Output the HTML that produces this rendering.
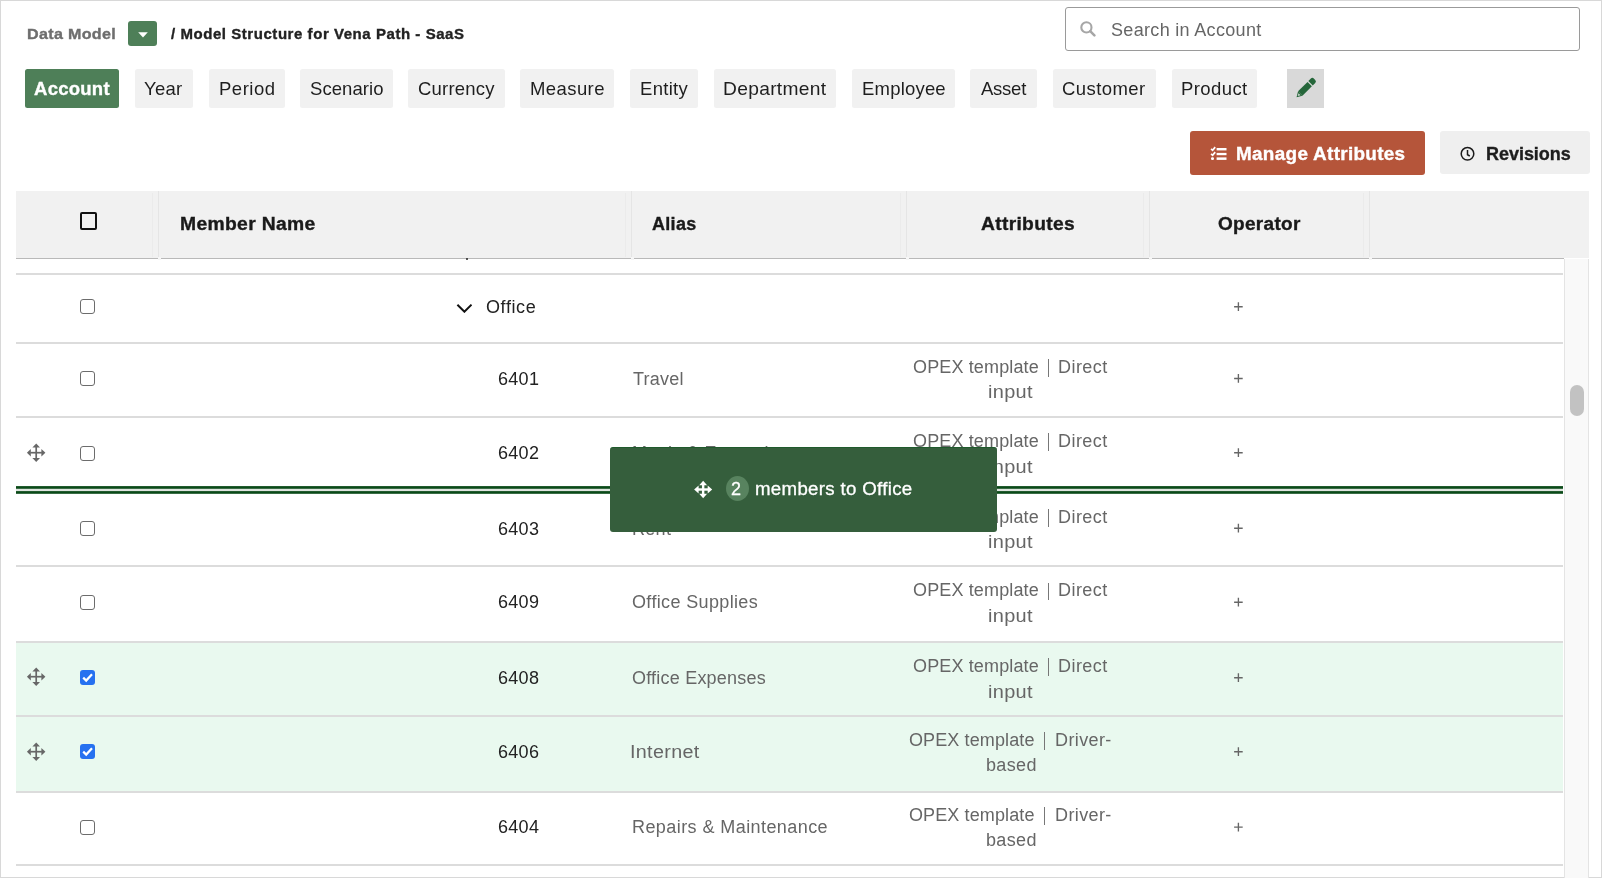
<!DOCTYPE html>
<html><head><meta charset="utf-8">
<style>
*{margin:0;padding:0;box-sizing:border-box}
html,body{width:1602px;height:878px;overflow:hidden;background:#fff}
body{position:relative;font-family:"Liberation Sans",sans-serif;color:#222}
.frame{position:absolute;left:0;top:0;width:1602px;height:878px;border:1px solid #d8d8d8}
.a{position:absolute}
.t{position:absolute;white-space:nowrap;line-height:1;will-change:transform}
.tab{position:absolute;top:69px;height:39px;background:#f1f1f1;border-radius:2.5px}
.hl{position:absolute;left:16px;width:1547px;height:2px;background:#dcdcdc}
.cb{position:absolute;left:80px;width:15px;height:15px;border:1.8px solid #6c6c6c;border-radius:3px;background:#fff}
.cbc{position:absolute;left:80px;width:15px;height:15px;border-radius:3px;background:#2671f0}
.plus{position:absolute;left:1233px;width:10px;height:10px}
.plus:before{content:"";position:absolute;left:0;top:4px;width:10px;height:1.3px;background:#666}
.plus:after{content:"";position:absolute;left:4.35px;top:0;width:1.3px;height:10px;background:#666}
.sep{position:absolute;top:191px;width:1px;height:67px;background:#e5e5e5}
.sepf{position:absolute;top:193px;width:1px;height:64px;background:#ebebeb}
.gap{position:absolute;top:257px;width:3px;height:3px;background:#f6f6f6}
</style></head><body>
<div class="frame"></div>

<!-- breadcrumb dropdown -->
<div class="a" style="left:128px;top:21px;width:29px;height:25px;background:#4e7f58;border-radius:3px">
  <svg class="a" style="left:10px;top:11px" width="10" height="6" viewBox="0 0 10 6"><path d="M0.2 0.2H9.8L5 5.4Z" fill="#fff"/></svg>
</div>

<!-- search -->
<div class="a" style="left:1065px;top:7px;width:515px;height:44px;border:1.7px solid #9a9a9a;border-radius:3px"></div>
<svg class="a" style="left:1080px;top:21px" width="16" height="16" viewBox="0 0 16 16"><circle cx="6.4" cy="6.4" r="5.1" fill="none" stroke="#a6a6a6" stroke-width="2.1"/><path d="M10.2 10.2L14.4 14.4" stroke="#a6a6a6" stroke-width="2.5" stroke-linecap="round"/></svg>

<!-- tabs -->
<div class="tab" style="left:25px;width:94px;background:#4e7f58"></div>
<div class="tab" style="left:135px;width:58px"></div>
<div class="tab" style="left:209px;width:76px"></div>
<div class="tab" style="left:300px;width:93px"></div>
<div class="tab" style="left:408px;width:97px"></div>
<div class="tab" style="left:520px;width:94px"></div>
<div class="tab" style="left:630px;width:68px"></div>
<div class="tab" style="left:714px;width:122px"></div>
<div class="tab" style="left:852px;width:103px"></div>
<div class="tab" style="left:970px;width:67px"></div>
<div class="tab" style="left:1053px;width:103px"></div>
<div class="tab" style="left:1172px;width:85px"></div>
<div class="a" style="left:1287px;top:69px;width:37px;height:39px;background:#d9d9d9"></div>
<svg class="a" style="left:1284px;top:66px" width="44" height="44" viewBox="0 0 44 44"><g transform="translate(21.4 22.4) rotate(-45) translate(-12.5 0)"><path d="M0 0L5.2 -3.1V3.1Z" fill="#25663a"/><path d="M1.6 0L4.2 -1.5V1.5Z" fill="#cfd8d0"/><rect x="5.2" y="-3.1" width="13.4" height="6.2" fill="#25663a"/><path d="M19.8 -3.1H23.3Q25.4 -3.1 25.4 -1V1Q25.4 3.1 23.3 3.1H19.8Z" fill="#25663a"/></g></svg>

<!-- action buttons -->
<div class="a" style="left:1190px;top:131px;width:235px;height:44px;background:#b5553a;border-radius:3px"></div>
<svg class="a" style="left:1210px;top:146px" width="18" height="16" viewBox="0 0 18 16"><path d="M1.1 2.9L2.6 4.3L5.2 1.1M1.1 7.9L2.6 9.3L5.2 6.1" stroke="#fff" stroke-width="1.7" fill="none"/><rect x="1" y="11.2" width="3" height="2.8" rx="1.2" fill="#fff"/><rect x="6.6" y="2" width="9.9" height="2.4" fill="#fff"/><rect x="6.6" y="6.9" width="9.9" height="2.3" fill="#fff"/><rect x="6.6" y="11.4" width="9.9" height="2.5" fill="#fff"/></svg>
<div class="a" style="left:1440px;top:131px;width:150px;height:43px;background:#efefef;border-radius:3px"></div>
<svg class="a" style="left:1459px;top:146px" width="17" height="17" viewBox="0 0 17 17"><circle cx="8.5" cy="7.8" r="6.3" fill="none" stroke="#1a1a1a" stroke-width="1.5"/><path d="M8.5 3.9V8.7L10.8 10" stroke="#1a1a1a" stroke-width="1.5" fill="none"/></svg>

<!-- table header -->
<div class="a" style="left:16px;top:191px;width:1573px;height:67px;background:#f1f1f1"></div>
<div class="a" style="left:16px;top:258px;width:1548px;height:1px;background:#b9b9b9"></div>
<div class="sep" style="left:158px"></div><div class="sepf" style="left:152px"></div><div class="gap" style="left:158px"></div>
<div class="sep" style="left:631px"></div><div class="sepf" style="left:625px"></div><div class="gap" style="left:631px"></div>
<div class="sep" style="left:906px"></div><div class="sepf" style="left:900px"></div><div class="gap" style="left:906px"></div>
<div class="sep" style="left:1149px"></div><div class="sepf" style="left:1143px"></div><div class="gap" style="left:1149px"></div>
<div class="sep" style="left:1369px"></div><div class="sepf" style="left:1363px"></div><div class="gap" style="left:1369px"></div>
<div class="a" style="left:80px;top:212px;width:17px;height:18px;border:2px solid #111;border-radius:2px"></div>

<!-- scrollbar -->
<div class="a" style="left:1564px;top:259px;width:25px;height:619px;background:#f9f9f9;border-left:1px solid #e4e4e4;border-right:1px solid #e4e4e4"></div>
<div class="a" style="left:1570px;top:385px;width:14px;height:31px;background:#c2c2c2;border-radius:7px"></div>

<!-- body rows -->
<div class="a" style="left:16px;top:642px;width:1547px;height:150px;background:#e9f9ef"></div>
<div class="hl" style="top:273px"></div>
<div class="hl" style="top:342px"></div>
<div class="hl" style="top:416px"></div>
<div class="hl" style="top:565px"></div>
<div class="hl" style="top:641px"></div>
<div class="hl" style="top:715px"></div>
<div class="hl" style="top:791px"></div>
<div class="hl" style="top:864px"></div>

<div class="cb" style="top:299px"></div>
<svg class="a" style="left:456px;top:303px" width="16" height="10" viewBox="0 0 16 10"><path d="M1.4 1.7L8.4 8.7L15.5 1.6" stroke="#111" stroke-width="2" fill="none"/></svg>
<svg class="a" style="left:1233px;top:301px" width="11" height="11" viewBox="0 -0.19999999999998863 11 11"><path d="M1.1 5.5H9.7M5.4 1.1V9.8" stroke="#666" stroke-width="1.35"/></svg>

<div class="cb" style="top:371px"></div>
<svg class="a" style="left:1233px;top:373px" width="11" height="11" viewBox="0 0.0 11 11"><path d="M1.1 5.5H9.7M5.4 1.1V9.8" stroke="#666" stroke-width="1.35"/></svg>

<svg class="a" style="left:26px;top:443px" width="20" height="20" viewBox="0 0 20 20"><use href="#mvg"/></svg>
<div class="cb" style="top:446px"></div>
<svg class="a" style="left:1233px;top:447px" width="11" height="11" viewBox="0 -0.19999999999998863 11 11"><path d="M1.1 5.5H9.7M5.4 1.1V9.8" stroke="#666" stroke-width="1.35"/></svg>

<div class="cb" style="top:521px"></div>
<svg class="a" style="left:1233px;top:523px" width="11" height="11" viewBox="0 0.2999999999999545 11 11"><path d="M1.1 5.5H9.7M5.4 1.1V9.8" stroke="#666" stroke-width="1.35"/></svg>

<div class="cb" style="top:595px"></div>
<svg class="a" style="left:1233px;top:597px" width="11" height="11" viewBox="0 0.2999999999999545 11 11"><path d="M1.1 5.5H9.7M5.4 1.1V9.8" stroke="#666" stroke-width="1.35"/></svg>

<svg class="a" style="left:26px;top:667px" width="20" height="20" viewBox="0 0 20 20"><use href="#mvg"/></svg>
<div class="cbc" style="top:670px"><svg width="15" height="15" viewBox="0 0 15 15"><path d="M3.2 7.6L6.2 10.6L12 4.2" stroke="#fff" stroke-width="2.2" fill="none"/></svg></div>
<svg class="a" style="left:1233px;top:672px" width="11" height="11" viewBox="0 -0.20000000000004547 11 11"><path d="M1.1 5.5H9.7M5.4 1.1V9.8" stroke="#666" stroke-width="1.35"/></svg>

<svg class="a" style="left:26px;top:742px" width="20" height="20" viewBox="0 0 20 20"><use href="#mvg"/></svg>
<div class="cbc" style="top:744px"><svg width="15" height="15" viewBox="0 0 15 15"><path d="M3.2 7.6L6.2 10.6L12 4.2" stroke="#fff" stroke-width="2.2" fill="none"/></svg></div>
<svg class="a" style="left:1233px;top:746px" width="11" height="11" viewBox="0 -0.20000000000004547 11 11"><path d="M1.1 5.5H9.7M5.4 1.1V9.8" stroke="#666" stroke-width="1.35"/></svg>

<div class="cb" style="top:820px"></div>
<svg class="a" style="left:1233px;top:822px" width="11" height="11" viewBox="0 0.39999999999997726 11 11"><path d="M1.1 5.5H9.7M5.4 1.1V9.8" stroke="#666" stroke-width="1.35"/></svg>

<div class="a" style="left:466px;top:258px;width:2px;height:2px;background:#222;border-radius:1px"></div>
<div class="t" style="left:27.33px;top:26.3px;font-size:15px;font-weight:bold;color:#6e6e6e;letter-spacing:0.3px;-webkit-text-stroke:0.35px #6e6e6e;transform:scaleX(1.0728);transform-origin:0 0">Data Model</div>
<div class="t" style="left:170.6px;top:26.3px;font-size:15px;font-weight:bold;color:#222;letter-spacing:0.552px;-webkit-text-stroke:0.35px #222">/ Model Structure for Vena Path - SaaS</div>
<div class="t" style="left:1110.9px;top:20.8px;font-size:18px;font-weight:normal;color:#666;letter-spacing:0.324px">Search in Account</div>
<div class="t" style="left:33.7px;top:79.8px;font-size:18.5px;font-weight:bold;color:#fff;letter-spacing:0.266px;-webkit-text-stroke:0.35px #fff">Account</div>
<div class="t" style="left:143.7px;top:79.6px;font-size:18.5px;font-weight:normal;color:#1e1e1e;letter-spacing:0.3px">Year</div>
<div class="t" style="left:218.5px;top:79.6px;font-size:18.5px;font-weight:normal;color:#1e1e1e;letter-spacing:0.5px">Period</div>
<div class="t" style="left:309.5px;top:79.6px;font-size:18.5px;font-weight:normal;color:#1e1e1e;letter-spacing:0.071px">Scenario</div>
<div class="t" style="left:418.0px;top:79.6px;font-size:18.5px;font-weight:normal;color:#1e1e1e;letter-spacing:0.214px">Currency</div>
<div class="t" style="left:530.0px;top:79.6px;font-size:18.5px;font-weight:normal;color:#1e1e1e;letter-spacing:0.417px">Measure</div>
<div class="t" style="left:640.0px;top:79.6px;font-size:18.5px;font-weight:normal;color:#1e1e1e;letter-spacing:0.3px">Entity</div>
<div class="t" style="left:723.26px;top:79.6px;font-size:18.5px;font-weight:normal;color:#1e1e1e;letter-spacing:0.3px;transform:scaleX(1.0378);transform-origin:0 0">Department</div>
<div class="t" style="left:861.8px;top:79.6px;font-size:18.5px;font-weight:normal;color:#1e1e1e;letter-spacing:0.199px">Employee</div>
<div class="t" style="left:981.0px;top:79.6px;font-size:18.5px;font-weight:normal;color:#1e1e1e;letter-spacing:-0.25px">Asset</div>
<div class="t" style="left:1062.0px;top:79.6px;font-size:18.5px;font-weight:normal;color:#1e1e1e;letter-spacing:0.429px">Customer</div>
<div class="t" style="left:1181.0px;top:79.6px;font-size:18.5px;font-weight:normal;color:#1e1e1e;letter-spacing:0.417px">Product</div>
<div class="t" style="left:1236.05px;top:144.8px;font-size:18px;font-weight:bold;color:#fff;letter-spacing:0.3px;-webkit-text-stroke:0.35px #fff;transform:scaleX(1.0494);transform-origin:0 0">Manage Attributes</div>
<div class="t" style="left:1485.5px;top:144.8px;font-size:18px;font-weight:bold;color:#1e1e1e;letter-spacing:-0.036px;-webkit-text-stroke:0.35px #1e1e1e">Revisions</div>
<div class="t" style="left:180.43px;top:215.0px;font-size:18px;font-weight:bold;color:#1a1a1a;letter-spacing:0.3px;-webkit-text-stroke:0.35px #1a1a1a;transform:scaleX(1.0726);transform-origin:0 0">Member Name</div>
<div class="t" style="left:652.0px;top:215.0px;font-size:18px;font-weight:bold;color:#1a1a1a;letter-spacing:0.3px;-webkit-text-stroke:0.35px #1a1a1a">Alias</div>
<div class="t" style="left:981.43px;top:215.0px;font-size:18px;font-weight:bold;color:#1a1a1a;letter-spacing:0.3px;-webkit-text-stroke:0.35px #1a1a1a;transform:scaleX(1.0674);transform-origin:0 0">Attributes</div>
<div class="t" style="left:1217.75px;top:215.0px;font-size:18px;font-weight:bold;color:#1a1a1a;letter-spacing:0.3px;-webkit-text-stroke:0.35px #1a1a1a;transform:scaleX(1.0545);transform-origin:0 0">Operator</div>
<div class="t" style="left:486.0px;top:298.0px;font-size:18px;font-weight:normal;color:#222;letter-spacing:0.6px">Office</div>
<div class="t" style="left:497.8px;top:369.8px;font-size:18px;font-weight:normal;color:#222;letter-spacing:0.3px">6401</div>
<div class="t" style="left:632.5px;top:369.8px;font-size:18px;font-weight:normal;color:#666;letter-spacing:0.22px">Travel</div>
<div class="t" style="left:912.9px;top:357.8px;font-size:18px;font-weight:normal;color:#666;letter-spacing:0.142px">OPEX template</div>
<div class="t" style="left:1058.4px;top:357.8px;font-size:18px;font-weight:normal;color:#666;letter-spacing:0.44px">Direct</div>
<div class="t" style="left:988.29px;top:383.3px;font-size:18px;font-weight:normal;color:#666;letter-spacing:0.3px;transform:scaleX(1.1077);transform-origin:0 0">input</div>
<div class="t" style="left:497.8px;top:444.0px;font-size:18px;font-weight:normal;color:#222;letter-spacing:0.3px">6402</div>
<div class="t" style="left:631.5px;top:444.0px;font-size:18px;font-weight:normal;color:#666;letter-spacing:0.3px">Meals &amp; Entertainment</div>
<div class="t" style="left:912.9px;top:432.0px;font-size:18px;font-weight:normal;color:#666;letter-spacing:0.142px">OPEX template</div>
<div class="t" style="left:1058.4px;top:432.0px;font-size:18px;font-weight:normal;color:#666;letter-spacing:0.44px">Direct</div>
<div class="t" style="left:988.29px;top:457.5px;font-size:18px;font-weight:normal;color:#666;letter-spacing:0.3px;transform:scaleX(1.1077);transform-origin:0 0">input</div>
<div class="t" style="left:497.8px;top:519.5px;font-size:18px;font-weight:normal;color:#222;letter-spacing:0.3px">6403</div>
<div class="t" style="left:631.5px;top:519.5px;font-size:18px;font-weight:normal;color:#666;letter-spacing:0.3px">Rent</div>
<div class="t" style="left:912.9px;top:507.5px;font-size:18px;font-weight:normal;color:#666;letter-spacing:0.142px">OPEX template</div>
<div class="t" style="left:1058.4px;top:507.5px;font-size:18px;font-weight:normal;color:#666;letter-spacing:0.44px">Direct</div>
<div class="t" style="left:988.29px;top:533.0px;font-size:18px;font-weight:normal;color:#666;letter-spacing:0.3px;transform:scaleX(1.1077);transform-origin:0 0">input</div>
<div class="t" style="left:497.8px;top:593.3px;font-size:18px;font-weight:normal;color:#222;letter-spacing:0.3px">6409</div>
<div class="t" style="left:631.5px;top:593.3px;font-size:18px;font-weight:normal;color:#666;letter-spacing:0.357px">Office Supplies</div>
<div class="t" style="left:912.9px;top:581.3px;font-size:18px;font-weight:normal;color:#666;letter-spacing:0.142px">OPEX template</div>
<div class="t" style="left:1058.4px;top:581.3px;font-size:18px;font-weight:normal;color:#666;letter-spacing:0.44px">Direct</div>
<div class="t" style="left:988.29px;top:606.8px;font-size:18px;font-weight:normal;color:#666;letter-spacing:0.3px;transform:scaleX(1.1077);transform-origin:0 0">input</div>
<div class="t" style="left:497.8px;top:669.0px;font-size:18px;font-weight:normal;color:#222;letter-spacing:0.3px">6408</div>
<div class="t" style="left:631.5px;top:669.0px;font-size:18px;font-weight:normal;color:#666;letter-spacing:0.214px">Office Expenses</div>
<div class="t" style="left:912.9px;top:657.0px;font-size:18px;font-weight:normal;color:#666;letter-spacing:0.142px">OPEX template</div>
<div class="t" style="left:1058.4px;top:657.0px;font-size:18px;font-weight:normal;color:#666;letter-spacing:0.44px">Direct</div>
<div class="t" style="left:988.29px;top:682.5px;font-size:18px;font-weight:normal;color:#666;letter-spacing:0.3px;transform:scaleX(1.1077);transform-origin:0 0">input</div>
<div class="t" style="left:497.8px;top:743.0px;font-size:18px;font-weight:normal;color:#222;letter-spacing:0.3px">6406</div>
<div class="t" style="left:630.31px;top:743.0px;font-size:18px;font-weight:normal;color:#666;letter-spacing:0.3px;transform:scaleX(1.0967);transform-origin:0 0">Internet</div>
<div class="t" style="left:909.4px;top:730.6px;font-size:18px;font-weight:normal;color:#666;letter-spacing:0.116px">OPEX template</div>
<div class="t" style="left:1054.9px;top:730.6px;font-size:18px;font-weight:normal;color:#666;letter-spacing:0.384px">Driver-</div>
<div class="t" style="left:985.5px;top:756.0px;font-size:18px;font-weight:normal;color:#666;letter-spacing:0.35px">based</div>
<div class="t" style="left:497.8px;top:818.4px;font-size:18px;font-weight:normal;color:#222;letter-spacing:0.3px">6404</div>
<div class="t" style="left:631.5px;top:818.4px;font-size:18px;font-weight:normal;color:#666;letter-spacing:0.425px">Repairs &amp; Maintenance</div>
<div class="t" style="left:909.4px;top:806.0px;font-size:18px;font-weight:normal;color:#666;letter-spacing:0.116px">OPEX template</div>
<div class="t" style="left:1054.9px;top:806.0px;font-size:18px;font-weight:normal;color:#666;letter-spacing:0.384px">Driver-</div>
<div class="t" style="left:985.5px;top:831.4px;font-size:18px;font-weight:normal;color:#666;letter-spacing:0.35px">based</div>
<div class="a" style="left:1047.6px;top:359.1px;width:1.6px;height:17.8px;background:#777"></div>
<div class="a" style="left:1047.6px;top:433.3px;width:1.6px;height:17.8px;background:#777"></div>
<div class="a" style="left:1047.6px;top:508.8px;width:1.6px;height:17.8px;background:#777"></div>
<div class="a" style="left:1047.6px;top:582.6px;width:1.6px;height:17.8px;background:#777"></div>
<div class="a" style="left:1047.6px;top:658.3px;width:1.6px;height:17.8px;background:#777"></div>
<div class="a" style="left:1043.7px;top:732.0px;width:1.6px;height:17.8px;background:#777"></div>
<div class="a" style="left:1043.7px;top:807.4px;width:1.6px;height:17.8px;background:#777"></div>

<!-- drop indicator -->
<svg class="a" style="left:16px;top:484px" width="1547" height="12" viewBox="0 484 1547 12"><rect x="0" y="488.8" width="1547" height="2.3" fill="#dfe4df"/><rect x="0" y="486.1" width="1547" height="2.7" fill="#0a4a18"/><rect x="0" y="491.1" width="1547" height="2.7" fill="#0a4a18"/></svg>

<!-- drag overlay -->
<div class="a" style="left:610px;top:447px;width:387px;height:85px;background:#355e3c;border-radius:3px;border-top:1px solid #1f5a2c"></div>
<svg class="a" style="left:693px;top:479px" width="20" height="20" viewBox="0 0 20 20"><use href="#mvw"/></svg>
<div class="a" style="left:726px;top:476px;width:23px;height:25px;border-radius:50%;background:#58835f"></div>
<div class="t" style="left:731.0px;top:480.0px;font-size:18px;font-weight:normal;color:#fff;letter-spacing:0.0px;-webkit-text-stroke:0.3px #fff">2</div>
<div class="t" style="left:755.26px;top:479.7px;font-size:18px;font-weight:normal;color:#fff;letter-spacing:0.3px;-webkit-text-stroke:0.3px #fff;transform:scaleX(1.0373);transform-origin:0 0">members to Office</div>

<svg width="0" height="0" style="position:absolute">
<defs>
<g id="mvg" fill="#676767"><path d="M10.2 0.6L14 4.6H6.4Z"/><path d="M10.2 19L14 15.1H6.4Z"/><path d="M0.9 9.7L4.8 5.9V13.5Z"/><path d="M19.4 9.7L15.4 5.9V13.5Z"/><rect x="9.35" y="4" width="1.7" height="11.5"/><rect x="4.4" y="8.85" width="11.5" height="1.7"/></g>
<g id="mvw" fill="#fff"><path d="M10.15 1.8L14.1 6.3H6.2Z"/><path d="M10.15 19.3L14.1 14.8H6.2Z"/><path d="M1.1 10.5L5.6 6.55V14.45Z"/><path d="M19.2 10.5L14.7 6.55V14.45Z"/><rect x="8.95" y="5.5" width="2.4" height="10"/><rect x="5" y="9.3" width="10.3" height="2.4"/></g>
</defs></svg>
</body></html>
